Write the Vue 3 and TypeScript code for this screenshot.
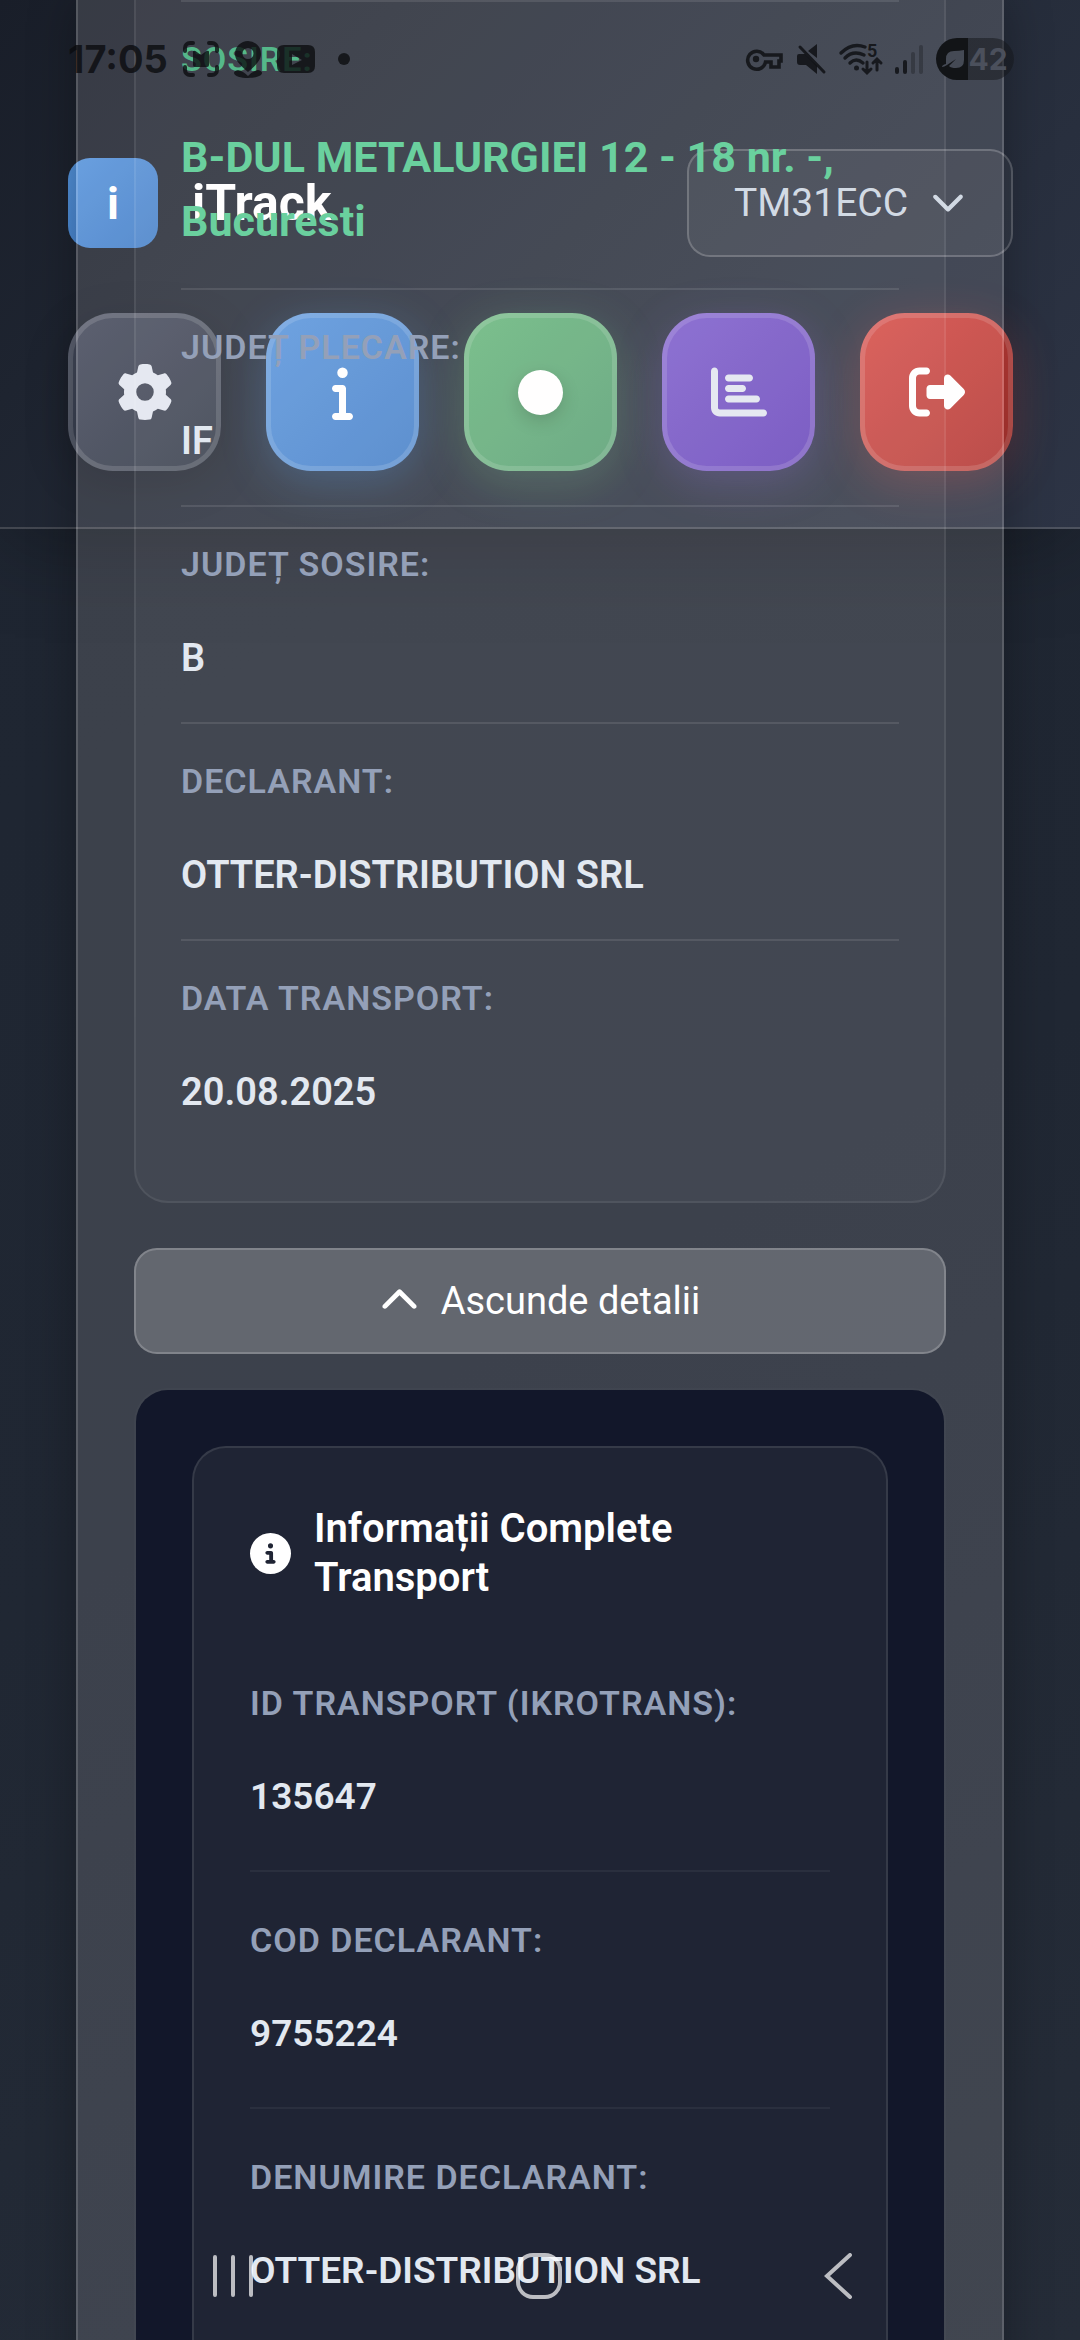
<script setup lang="ts">
import { ref } from 'vue'

interface Field {
  label: string
  value: string
  accent?: boolean
}

interface Action {
  name: string
  tone: string
  viewBox: string
  path: string
}

const vehicles: string[] = ['TM31ECC']
const vehicle = ref<string>('TM31ECC')
const expanded = ref<boolean>(true)

const summary: Field[] = [
  { label: 'Sosire:', value: 'B-DUL METALURGIEI 12 - 18 nr. -, Bucuresti', accent: true },
  { label: 'Județ plecare:', value: 'IF' },
  { label: 'Județ sosire:', value: 'B' },
  { label: 'Declarant:', value: 'OTTER-DISTRIBUTION SRL' },
  { label: 'Data transport:', value: '20.08.2025' },
]

const details: Field[] = [
  { label: 'ID transport (ikrotrans):', value: '135647' },
  { label: 'Cod declarant:', value: '9755224' },
  { label: 'Denumire declarant:', value: 'OTTER-DISTRIBUTION SRL' },
]

const actions: Action[] = [
  {
    name: 'Setări',
    tone: 'slate',
    viewBox: '0 0 512 512',
    path: 'M495.9 166.6c3.2 8.7 .5 18.4-6.4 24.6l-43.3 39.4c1.1 8.3 1.7 16.8 1.7 25.4s-.6 17.1-1.7 25.4l43.3 39.4c6.9 6.2 9.6 15.9 6.4 24.6c-4.4 11.9-9.7 23.3-15.8 34.3l-4.7 8.1c-6.6 11-14 21.4-22.1 31.2c-5.9 7.2-15.7 9.6-24.5 6.8l-55.7-17.7c-13.4 10.3-28.2 18.9-44 25.4l-12.5 57.1c-2 9.1-9 16.3-18.2 17.8c-13.8 2.3-28 3.5-42.5 3.5s-28.7-1.2-42.5-3.5c-9.2-1.5-16.2-8.7-18.2-17.8l-12.5-57.1c-15.8-6.5-30.6-15.1-44-25.4L83.1 425.9c-8.8 2.8-18.6 .3-24.5-6.8c-8.1-9.8-15.5-20.2-22.1-31.2l-4.7-8.1c-6.1-11-11.4-22.4-15.8-34.3c-3.2-8.7-.5-18.4 6.4-24.6l43.3-39.4C64.6 273.1 64 264.6 64 256s.6-17.1 1.7-25.4L22.4 191.2c-6.9-6.2-9.6-15.9-6.4-24.6c4.4-11.9 9.7-23.3 15.8-34.3l4.7-8.1c6.6-11 14-21.4 22.1-31.2c5.9-7.2 15.7-9.6 24.5-6.8l55.7 17.7c13.4-10.3 28.2-18.9 44-25.4l12.5-57.1c2-9.1 9-16.3 18.2-17.8C227.3 1.2 241.5 0 256 0s28.7 1.2 42.5 3.5c9.2 1.5 16.2 8.7 18.2 17.8l12.5 57.1c15.8 6.5 30.6 15.1 44 25.4l55.7-17.7c8.8-2.8 18.6-.3 24.5 6.8c8.1 9.8 15.5 20.2 22.1 31.2l4.7 8.1c6.1 11 11.4 22.4 15.8 34.3zM256 336a80 80 0 1 0 0-160 80 80 0 1 0 0 160z',
  },
  {
    name: 'Informații',
    tone: 'blue',
    viewBox: '0 0 192 512',
    path: 'M48 80a48 48 0 1 1 96 0A48 48 0 1 1 48 80zM0 224c0-17.7 14.3-32 32-32l64 0c17.7 0 32 14.3 32 32l0 224 32 0c17.7 0 32 14.3 32 32s-14.3 32-32 32L32 512c-17.7 0-32-14.3-32-32s14.3-32 32-32l32 0 0-192-32 0c-17.7 0-32-14.3-32-32z',
  },
  { name: 'Stare', tone: 'green', viewBox: '', path: '' },
  {
    name: 'Statistici',
    tone: 'purple',
    viewBox: '0 0 512 512',
    path: 'M32 32c17.7 0 32 14.3 32 32V400c0 8.8 7.2 16 16 16H480c17.7 0 32 14.3 32 32s-14.3 32-32 32H80c-44.2 0-80-35.8-80-80V64C0 46.3 14.3 32 32 32zm96 96c0-17.7 14.3-32 32-32l192 0c17.7 0 32 14.3 32 32s-14.3 32-32 32l-192 0c-17.7 0-32-14.3-32-32zm32 64H288c17.7 0 32 14.3 32 32s-14.3 32-32 32H160c-17.7 0-32-14.3-32-32s14.3-32 32-32zm0 96H416c17.7 0 32 14.3 32 32s-14.3 32-32 32H160c-17.7 0-32-14.3-32-32s14.3-32 32-32z',
  },
  {
    name: 'Deconectare',
    tone: 'red',
    viewBox: '0 0 512 512',
    path: 'M377.9 105.9L500.7 228.7c7.2 7.2 11.3 17.1 11.3 27.3s-4.1 20.1-11.3 27.3L377.9 406.1c-6.4 6.4-15 9.9-24 9.9c-18.7 0-33.9-15.2-33.9-33.9l0-62.1-128 0c-17.7 0-32-14.3-32-32l0-64c0-17.7 14.3-32 32-32l128 0 0-62.1c0-18.7 15.2-33.9 33.9-33.9c9 0 17.6 3.6 24 9.9zM160 96L96 96c-17.7 0-32 14.3-32 32l0 256c0 17.7 14.3 32 32 32l64 0c17.7 0 32 14.3 32 32s-14.3 32-32 32l-64 0c-53 0-96-43-96-96L0 128C0 75 43 32 96 32l64 0c17.7 0 32 14.3 32 32s-14.3 32-32 32z',
  },
]
</script>

<template>
  <div class="screen">
    <header class="header">
      <div class="brand-row">
        <div class="brand">
          <span class="logo">i</span>
          <h1 class="title">iTrack</h1>
        </div>
        <div class="picker">
          <select v-model="vehicle" class="picker-select" aria-label="Vehicul">
            <option v-for="v in vehicles" :key="v" :value="v">{{ v }}</option>
          </select>
          <svg class="picker-icon" viewBox="0 0 512 512" aria-hidden="true">
            <path d="M233.4 406.6c12.5 12.5 32.8 12.5 45.3 0l192-192c12.5-12.5 12.5-32.8 0-45.3s-32.8-12.5-45.3 0L256 338.7 86.6 169.4c-12.5-12.5-32.8-12.5-45.3 0s-12.5 32.8 0 45.3l192 192z" />
          </svg>
        </div>
      </div>
      <nav class="actions">
        <button v-for="a in actions" :key="a.name" type="button" class="action" :class="a.tone" :aria-label="a.name">
          <svg v-if="a.path" class="action-icon" :viewBox="a.viewBox" aria-hidden="true"><path :d="a.path" /></svg>
          <span v-else class="dot"></span>
        </button>
      </nav>
    </header>

    <main class="transport">
      <section class="card">
        <dl class="fields">
          <div v-for="f in summary" :key="f.label" class="field" :class="{ accent: f.accent }">
            <dt>{{ f.label }}</dt>
            <dd>{{ f.value }}</dd>
          </div>
        </dl>
      </section>

      <button type="button" class="toggle" :aria-expanded="expanded" @click="expanded = !expanded">
        <svg class="toggle-icon" viewBox="0 0 512 512" aria-hidden="true">
          <path d="M233.4 105.4c12.5-12.5 32.8-12.5 45.3 0l192 192c12.5 12.5 12.5 32.8 0 45.3s-32.8 12.5-45.3 0L256 173.3 86.6 342.6c-12.5 12.5-32.8 12.5-45.3 0s-12.5-32.8 0-45.3l192-192z" />
        </svg>
        <span>{{ expanded ? 'Ascunde detalii' : 'Arată detalii' }}</span>
      </button>

      <section v-if="expanded" class="panel">
        <div class="panel-card">
          <h2 class="panel-title">
            <svg class="panel-icon" viewBox="0 0 512 512" aria-hidden="true">
              <path d="M256 512A256 256 0 1 0 256 0a256 256 0 1 0 0 512zM216 336h24V272H216c-13.3 0-24-10.7-24-24s10.7-24 24-24h48c13.3 0 24 10.7 24 24v88h8c13.3 0 24 10.7 24 24s-10.7 24-24 24H216c-13.3 0-24-10.7-24-24s10.7-24 24-24zm40-208a32 32 0 1 1 0 64 32 32 0 1 1 0-64z" />
            </svg>
            <span>Informații Complete Transport</span>
          </h2>
          <dl class="fields wide">
            <div v-for="f in details" :key="f.label" class="field">
              <dt>{{ f.label }}</dt>
              <dd>{{ f.value }}</dd>
            </div>
          </dl>
        </div>
      </section>
    </main>

    <div class="status">
      <div class="status-left">
        <span class="clock">17:05</span>
        <svg class="glyph frame" viewBox="0 0 36 36" width="36" height="36" aria-hidden="true">
          <path d="M2 10V7a5 5 0 0 1 5-5h3M26 2h3a5 5 0 0 1 5 5v3M34 26v3a5 5 0 0 1-5 5h-3M10 34H7a5 5 0 0 1-5-5v-3" fill="none" stroke="currentColor" stroke-width="4" stroke-linecap="round" />
          <path d="M10 11q0-2 2.500-1l5.500 4 5.500-4q2.500-1 2.500 1v13q0 2-2 2H12q-2 0-2-2z" />
        </svg>
        <svg class="glyph" viewBox="0 0 28 37" width="28" height="37" aria-hidden="true">
          <path fill-rule="evenodd" d="M14 0a13 13 0 0 1 13 13c0 8-9 14-13 18C10 27 1 21 1 13A13 13 0 0 1 14 0zm0 7a5 5 0 1 0 0 11 5 5 0 0 0 0-11z" />
          <path d="M4 29q5 1 10 6 5-5 10-6 4 1 4 3C28 35 21 37 14 37S0 35 0 32Q0 30 4 29z" />
        </svg>
        <svg class="glyph" viewBox="0 0 38 28" width="38" height="28" aria-hidden="true">
          <path fill-rule="evenodd" d="M7 0h24q7 0 7 7v14q0 7-7 7H7q-7 0-7-7V7q0-7 7-7zm8 9v11l10-5z" />
        </svg>
        <span class="pip"></span>
      </div>
      <div class="status-right">
        <svg class="glyph" viewBox="0 0 38 22" width="38" height="22" aria-hidden="true">
          <path d="M19 7h17v6h-2v6h-8v-5h-5.500A9 9 0 1 1 19 7z" fill="none" stroke="currentColor" stroke-width="3.600" />
          <circle cx="11" cy="11" r="3.200" />
        </svg>
        <svg class="glyph" viewBox="0 0 30 30" width="30" height="30" aria-hidden="true">
          <path d="M21 0v14L12 7zM1 12q0-2 2-2h6l12 12v8L10 21H4q-3 0-3-3z" />
          <path d="M4 3l24 25" stroke="currentColor" stroke-width="3" stroke-linecap="round" />
        </svg>
        <svg class="glyph" viewBox="0 0 43 32" width="43" height="32" aria-hidden="true">
          <g fill="none" stroke="currentColor" stroke-width="3.400" stroke-linecap="round">
            <path d="M2 10Q13-1 26 4M6 15q8-8 19-3M11 20q6-6 13 0" />
            <path d="M28 19v10M24 26l4 4 4-4M38 27V17M34 20l4-4 4 4" stroke-width="3" />
          </g>
          <circle cx="17.500" cy="25" r="2.500" />
          <text x="28" y="14" class="wifi-gen">5</text>
        </svg>
        <svg class="glyph" viewBox="0 0 28 30" width="28" height="30" aria-hidden="true">
          <path d="M2 25v3M10 18v10" stroke="currentColor" stroke-width="4" stroke-linecap="round" />
          <path d="M18 10v18M26 3v25" stroke="currentColor" stroke-width="4" stroke-linecap="round" opacity=".35" />
        </svg>
        <span class="battery">
          <svg viewBox="0 0 24 20" width="24" height="20" aria-hidden="true">
            <path d="M22 1v10q0 8-8 8-5 0-7-2l7-7-9 6Q2 18 0 18q0-2 4-3V10q0-8 8-8 5 0 10-1z" />
          </svg>
          <span class="level">42</span>
        </span>
      </div>
    </div>

    <div class="navbar">
      <button type="button" class="nav-key" aria-label="Recente">
        <svg viewBox="0 0 40 46" width="40" height="46"><path d="M2 4v38M20 4v38M38 4v38" /></svg>
      </button>
      <button type="button" class="nav-key" aria-label="Acasă">
        <svg viewBox="0 0 46 46" width="46" height="46"><rect x="2" y="2" width="42" height="42" rx="15" /></svg>
      </button>
      <button type="button" class="nav-key" aria-label="Înapoi">
        <svg viewBox="0 0 28 46" width="28" height="46"><path d="M26 2L3 23l23 21" /></svg>
      </button>
    </div>
  </div>
</template>

<style>
body {
  margin: 0;
  background: #1f2632;
}
</style>

<style scoped>
.screen {
  position: relative;
  height: 100vh;
  overflow: hidden;
  background: linear-gradient(150deg, #1e2531 0%, #202733 55%, #252c38 100%);
  color: #e2e8f0;
  font-family: Roboto, "Noto Sans", sans-serif;
}

.screen *,
.screen *::before {
  box-sizing: border-box;
}

button,
select {
  margin: 0;
  padding: 0;
  font-family: inherit;
}

/* Header sits below the translucent transport card */
.header {
  position: absolute;
  top: 0;
  left: 0;
  right: 0;
  padding: 149px 67px 56px 68px;
  border-bottom: 2px solid rgba(255, 255, 255, 0.18);
  background: linear-gradient(135deg, #191e29 0%, #232a37 50%, #2d3445 100%);
  box-shadow: 0 11px 90px rgba(0, 0, 0, 0.3);
}

.brand-row {
  display: flex;
  align-items: center;
  justify-content: space-between;
  margin-bottom: 56px;
}

.brand {
  display: flex;
  align-items: center;
  gap: 34px;
}

.logo {
  display: flex;
  align-items: center;
  justify-content: center;
  width: 90px;
  height: 90px;
  border-radius: 22px;
  background: linear-gradient(135deg, #5493dc, #407dc8);
  color: #fff;
  font-size: 45px;
  font-weight: 700;
}

.title {
  margin: 0;
  color: #fff;
  font-size: 50px;
  line-height: 60px;
  font-weight: 700;
}

.picker {
  position: relative;
}

.picker-select {
  display: block;
  width: 326px;
  height: 108px;
  padding: 0 45px;
  border: 2px solid rgba(255, 255, 255, 0.2);
  border-radius: 23px;
  background: rgba(255, 255, 255, 0.05);
  color: #cbd5e1;
  font-size: 39px;
  appearance: none;
}

.picker-icon {
  position: absolute;
  top: 35px;
  right: 48px;
  width: 34px;
  height: 34px;
  fill: #cbd5e1;
  pointer-events: none;
}

.actions {
  display: grid;
  grid-template-columns: repeat(5, 1fr);
  gap: 45px;
}

.action {
  display: flex;
  align-items: center;
  justify-content: center;
  height: 158px;
  border: 5px solid rgba(255, 255, 255, 0.14);
  border-radius: 45px;
  background-origin: border-box;
}

.action-icon {
  height: 56px;
  fill: #fff;
}

.slate {
  background-image: linear-gradient(135deg, #454b5d, #2e3645);
  box-shadow: 0 11px 45px rgba(0, 0, 0, 0.2);
}

.blue {
  background-image: linear-gradient(135deg, #5493dc, #407dc8);
  box-shadow: 0 11px 45px rgba(74, 144, 226, 0.3);
}

.green {
  background-image: linear-gradient(135deg, #64b579, #539e70);
  box-shadow: 0 11px 45px rgba(100, 181, 121, 0.3);
}

.purple {
  background-image: linear-gradient(135deg, #7959cc, #6441b9);
  box-shadow: 0 11px 45px rgba(121, 89, 204, 0.3);
}

.red {
  background-image: linear-gradient(135deg, #d54741, #b03531);
  box-shadow: 0 11px 45px rgba(213, 71, 65, 0.3);
}

.slate .action-icon,
.purple .action-icon {
  fill: #e2e6f0;
}

.dot {
  width: 45px;
  height: 45px;
  border-radius: 50%;
  background: #fff;
  box-shadow: 0 6px 17px rgba(0, 0, 0, 0.2);
}

.transport {
  position: relative;
  margin: 0 76px;
  padding: 0 56px 56px;
  border: solid rgba(255, 255, 255, 0.15);
  border-width: 0 2px;
  background: rgba(255, 248, 250, 0.128);
  box-shadow: 0 0 45px rgba(0, 0, 0, 0.3);
}

.card {
  padding: 0 45px 45px;
  border: 2px solid rgba(255, 255, 255, 0.07);
  border-top: 0;
  border-radius: 0 0 34px 34px;
  background: rgba(255, 255, 255, 0.035);
}

.fields {
  margin: 0;
}

.card .fields {
  border-top: 2px solid rgba(255, 255, 255, 0.1);
}

.field {
  display: flex;
  flex-direction: column;
  gap: 40px;
  padding: 32px 0 35px;
}

.field + .field {
  border-top: 2px solid rgba(255, 255, 255, 0.1);
}

dt {
  color: #94a0b8;
  font-size: 34px;
  line-height: 51px;
  font-weight: 600;
  letter-spacing: 1px;
  text-transform: uppercase;
}

dd {
  margin: 0;
  font-size: 38px;
  line-height: 57px;
  font-weight: 600;
}

.accent dt {
  color: #55b88a;
}

.accent dd {
  color: #6ad09e;
  font-size: 43px;
  line-height: 64px;
  font-weight: 700;
}

.toggle {
  display: flex;
  align-items: center;
  justify-content: center;
  gap: 22px;
  width: 100%;
  height: 106px;
  margin: 45px 0 34px;
  border: 2px solid rgba(255, 255, 255, 0.2);
  border-radius: 23px;
  background: rgba(255, 255, 255, 0.2);
  color: #fff;
  font-size: 38px;
}

.toggle-icon {
  width: 39px;
  height: 39px;
  fill: #fff;
}

.panel {
  padding: 56px;
  border: 2px solid rgba(255, 255, 255, 0.02);
  border-radius: 34px;
  background: #12172a;
  background-clip: padding-box;
}

.panel-card {
  padding: 56px;
  border: 2px solid rgba(255, 255, 255, 0.1);
  border-radius: 34px;
  background: #1f2434;
}

.panel-title {
  display: flex;
  align-items: center;
  gap: 23px;
  margin: 0 0 33px;
  color: #fff;
  font-size: 40px;
  line-height: 49px;
  font-weight: 600;
}

.panel-icon {
  flex: none;
  width: 41px;
  height: 41px;
  fill: #fff;
}

.wide .field {
  padding: 43px 0 46px;
}

.wide .field + .field {
  border-top-color: rgba(255, 255, 255, 0.05);
}

.wide dd {
  font-size: 37px;
  line-height: 55px;
}

/* System bars drawn over the page */
.status {
  position: absolute;
  top: 36px;
  left: 68px;
  right: 66px;
  display: flex;
  align-items: center;
  justify-content: space-between;
  height: 46px;
  color: rgba(10, 11, 14, 0.78);
}

.status-left,
.status-right {
  display: flex;
  align-items: center;
}

.status-left {
  gap: 15px;
}

.status-right {
  gap: 13px;
}

.glyph {
  flex: none;
  overflow: visible;
  fill: currentColor;
}

.clock {
  font-family: Inter, Roboto, sans-serif;
  font-size: 38px;
  line-height: 46px;
  font-weight: 700;
}

.pip {
  width: 12px;
  height: 12px;
  margin-left: 8px;
  border-radius: 50%;
  background: currentColor;
}

.wifi-gen {
  font-size: 18px;
  font-weight: 700;
}

.battery {
  display: flex;
  align-items: center;
  justify-content: center;
  gap: 2px;
  width: 78px;
  height: 42px;
  border-radius: 21px;
  background: linear-gradient(90deg, #121417 32px, rgba(20, 22, 26, 0.5) 32px);
  color: #4b505c;
}

.battery svg {
  fill: #454a55;
}

.level {
  font-family: Inter, Roboto, sans-serif;
  font-size: 30px;
  line-height: 42px;
  font-weight: 700;
}

.navbar {
  position: absolute;
  left: 0;
  right: 0;
  bottom: 0;
  display: flex;
  justify-content: space-between;
  padding: 0 228px 41px 213px;
}

.nav-key {
  display: flex;
  border: 0;
  background: none;
}

.nav-key svg {
  fill: none;
  stroke: rgba(255, 255, 255, 0.7);
  stroke-width: 4;
  stroke-linecap: round;
}
</style>
